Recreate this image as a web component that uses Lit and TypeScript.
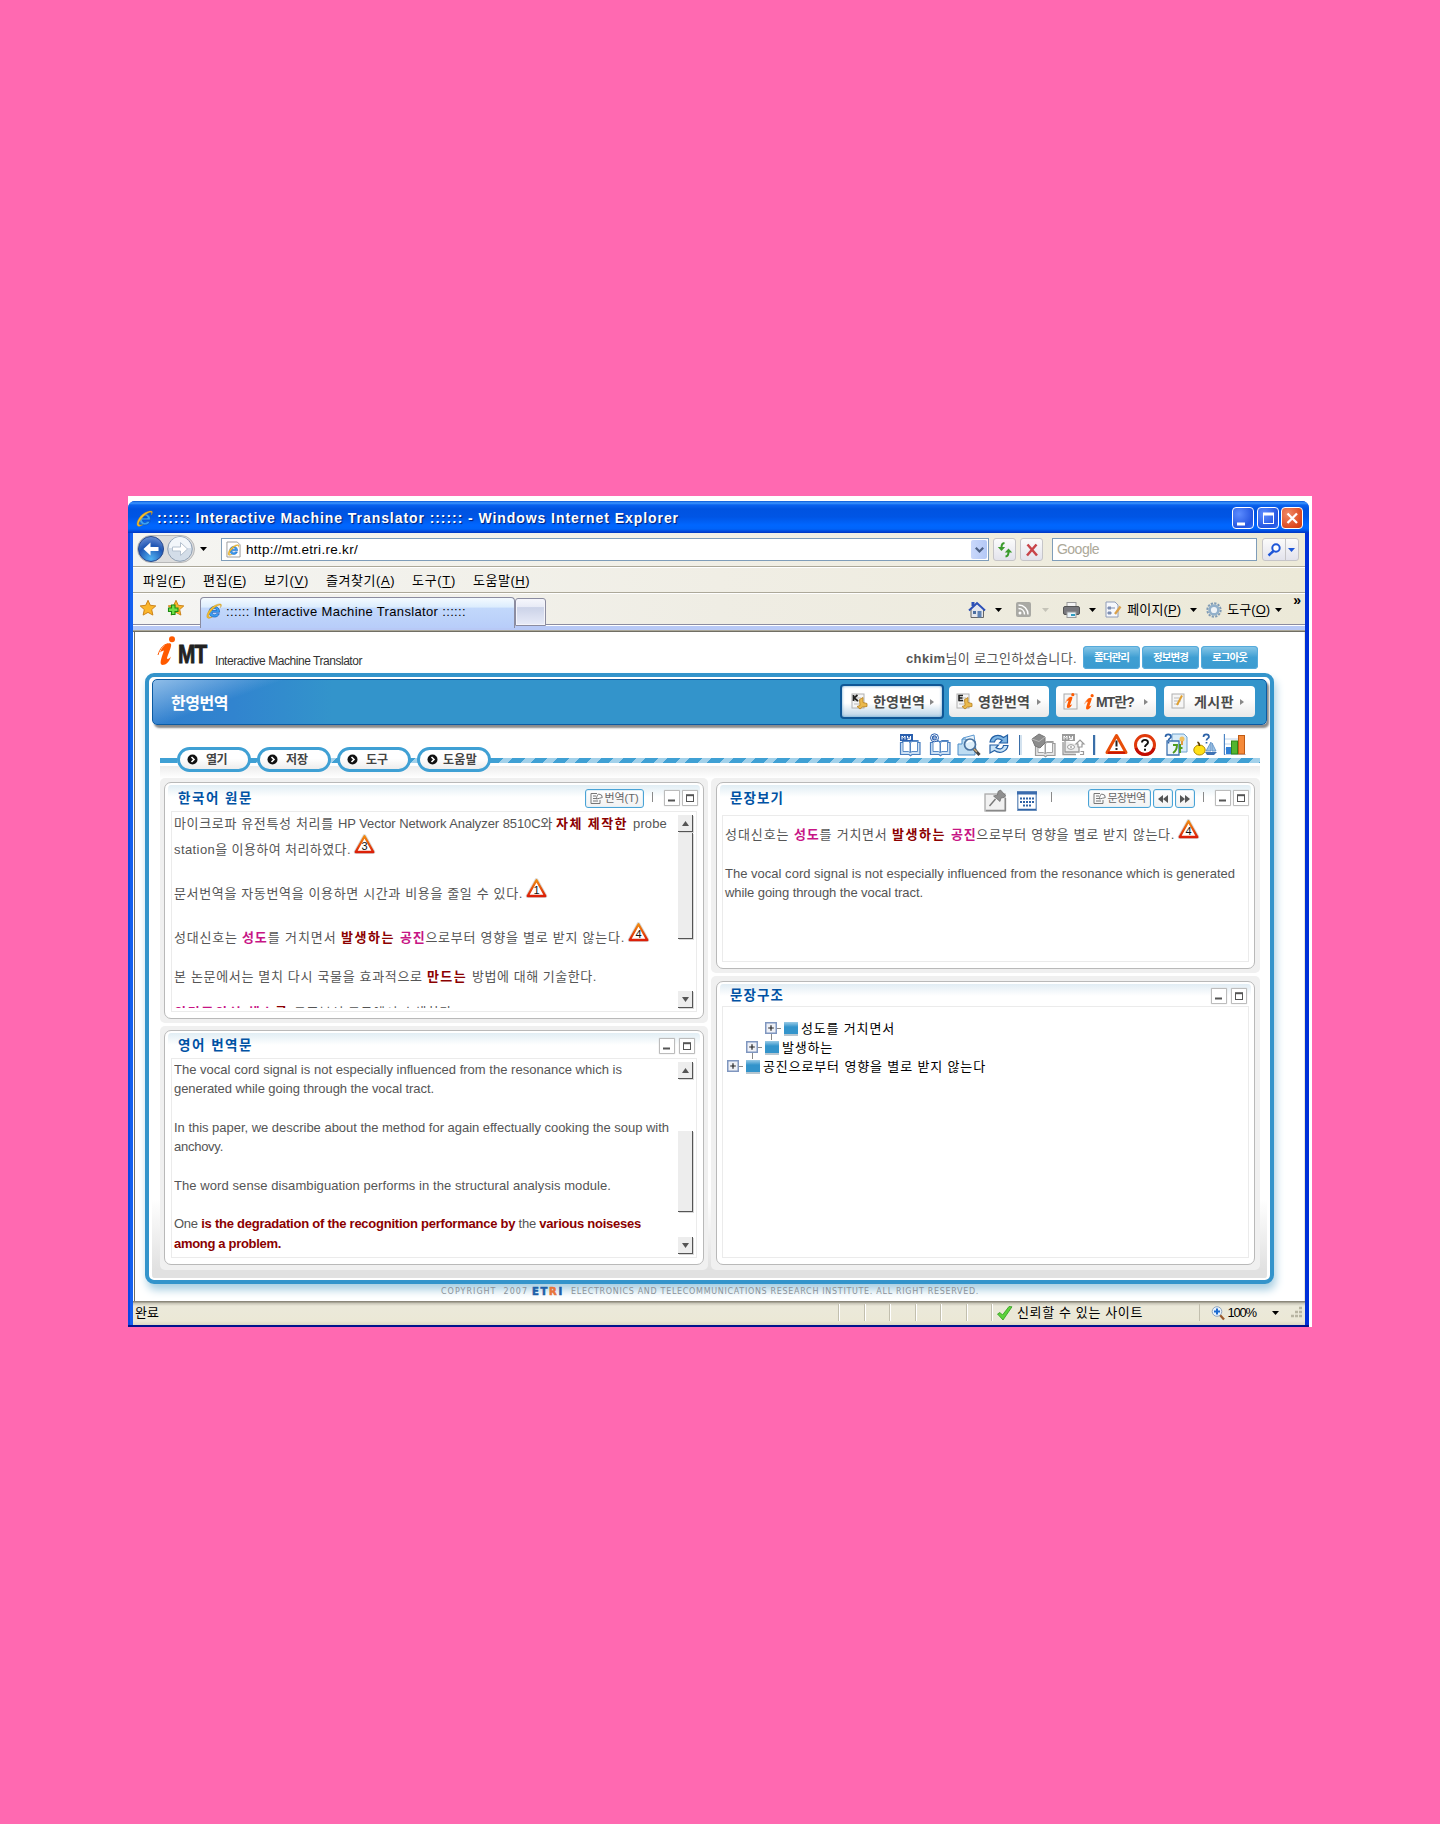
import { LitElement, html, svg, css } from "lit";
import { customElement, property } from "lit/decorators.js";
import { classMap } from "lit/directives/class-map.js";

/** Tracks its text out or in so that the label fills a given width. */
@customElement("fit-text")
class FitText extends LitElement {
  @property({ type: Number }) w = 0;
  static styles = css`
    :host { display: inline-block; white-space: pre; flex: none; }
    span { display: inline-block; }
  `;
  firstUpdated() {
    const s = this.renderRoot.querySelector("span") as HTMLElement;
    const n = s.getBoundingClientRect().width;
    const count = (this.textContent || "").length || 1;
    s.style.letterSpacing = (this.w - n) / count + "px";
    this.style.width = this.w + "px";
  }
  render() {
    return html`<span><slot></slot></span>`;
  }
}

const ic = (w: number, h: number, vb: string, body: unknown) =>
  html`<svg class="ic" width=${w} height=${h} viewBox=${vb}>${body}</svg>`;

const ieGlyph = svg`
  <path d="M13.6 9.300H6c.2 1.700 1.100 2.500 2.400 2.500 1 0 1.700-.4 2.100-1.100h2.800c-.8 2.300-2.600 3.400-5 3.400-3.200 0-5.200-2-5.200-5.200C3.100 5.700 5.200 3.500 8.400 3.500c3.300 0 5.400 2.200 5.200 5.800zM6 7.500h4.700C10.500 6.200 9.700 5.500 8.400 5.500S6.300 6.200 6 7.500z" fill="#3ba0f2" stroke="#0c4fb4" stroke-width=".6"/>
  <path d="M15 1.200C12.500.3 7 2.500 3.700 6.700 1 10.200.2 13.800 1.600 15c1 .8 3 0 4.700-1.100C4.500 14.300 3 14.500 2.700 13.500 2.200 12 4.500 8.500 7.500 5.700 10.500 3 13.500 1.500 14.500 2.300c.5.500.2 1.500-.1 2.300C15.300 3.200 15.800 1.800 15 1.200z" fill="#f6bd2c" stroke="#c08c10" stroke-width=".4"/>`;
const ie = (s = 16) => ic(s, s, "0 0 16 16", ieGlyph);

const caret = (color = "#000") => ic(7, 4, "0 0 7 4", svg`<path d="M0 0h7L3.500 4z" fill=${color}/>`);
const starPath = "M8 .3l2.300 5 5.500.6-4.100 3.700 1.200 5.500L8 12.400l-4.900 2.700 1.200-5.500L.2 5.900l5.500-.6z";

const warn = (n: number) => ic(21, 20, "0 0 21 20", svg`
  <path d="M10.500 2.200L19.300 18H1.700z" fill="#fff" stroke="#d9d9d9" stroke-width="4" stroke-linejoin="round"/>
  <path d="M10.500 2.200L19.300 18H1.700z" fill="#fff" stroke="url(#wg)" stroke-width="2.300" stroke-linejoin="round"/>
  <defs><linearGradient id="wg" x1="0" y1="0" x2="0" y2="1"><stop offset="0" stop-color="#f08a10"/><stop offset="1" stop-color="#dc1f08"/></linearGradient></defs>
  <text x="10.500" y="16" text-anchor="middle" font-size="11" font-family="Liberation Sans" fill="#111">${n}</text>`);

const book = (stroke: string, fill: string) => svg`
  <path d="M1.500 9.500h2v-2h5.500l2 1.500 2-1.500h6v2h2v12h-8l-1.500 1.300-1.500-1.300h-8.500z" fill=${fill} stroke=${stroke} stroke-width="1.200"/>
  <path d="M4 8.500h5.500l1.500 1.300v9.700l-1.500-1H4zM18.500 8.500h-5.500l-1.500 1.300v9.700l1.500-1h5.500z" fill="#fff" stroke=${stroke} stroke-width=".9"/>`;

const tools = {
  my: ic(23, 24, "0 0 23 24", svg`${book("#4a7fc0", "#cfe2f4")}<rect x="1" y="1" width="13" height="7" fill="#2a5fae"/><path d="M3 6.500V3l1.500 1.500L6 3v3.500M8.500 3v2h3V3M11.500 5v1.500h-3" fill="none" stroke="#fff"/>`),
  e: ic(23, 24, "0 0 23 24", svg`${book("#4a7fc0", "#cfe2f4")}<circle cx="5.500" cy="4.800" r="4" fill="#fff" stroke="#2a5fae"/><path d="M3.500 5h4c0-3-4-2.800-4 0 0 2.500 3 2.300 4 1" fill="none" stroke="#2a5fae" stroke-width="1.200"/>`),
  find: ic(25, 24, "0 0 25 24", svg`
    <path d="M6 5l11-3 2 15H6z" fill="#eaf4fc" stroke="#5b97cf"/><path d="M1 11h4V6h4l1 2h8v14H1z" fill="#bddcf2" stroke="#4a8cc8"/>
    <circle cx="13" cy="11.500" r="5.500" fill="#dceefa" stroke="#49729f" stroke-width="1.700"/><path d="M10 10c1-2 3-2.500 5-1.500" stroke="#fff" stroke-width="1.500" fill="none"/>
    <path d="M17 16l5.500 6" stroke="#444" stroke-width="3"/><path d="M17 16l3 3" stroke="#c9a87a" stroke-width="1.500"/>`),
  sync: ic(22, 22, "0 0 22 22", svg`
    <path d="M2 9C3 3 10 0 15.500 4.500L19.500 2v8h-8l2.500-2.700C10 4.500 7 6 6.500 9z" fill="#7fb6e4" stroke="#235fa4" stroke-width="1.200"/>
    <path d="M20 12.500C19 18.500 12 21.500 6.500 17.500L2 20v-8h8.500L8 14.700C12 17 15 16 15.500 12.500z" fill="#c9e3f6" stroke="#235fa4" stroke-width="1.200"/>`),
  grad: ic(25, 24, "0 0 25 24", svg`<g transform="translate(3 1)">${book("#9a9a9a", "#e4e4e4")}</g>
    <path d="M1 6l7-5 6 3v6l-5 5-5-2z" fill="#8c8c8c" stroke="#777"/><path d="M1 6l7 2.500 6-4.500" stroke="#b9b9b9" fill="none"/>`),
  myGray: ic(24, 24, "0 0 24 24", svg`<path d="M2 9v12.500h13M4 8v11h14v-7" fill="#ededed" stroke="#9a9a9a" stroke-width="1.300"/>
    <rect x="1" y="1" width="13" height="7" fill="#9a9a9a"/><path d="M3 6.500V3l1.500 1.500L6 3v3.500M8.500 3v2h3V3M11.500 5v1.500h-3" fill="none" stroke="#fff"/>
    <path d="M15 11l4-4 4 4h-2v3h-4v-3zM19 21.500h3.500v-3h-3" fill="#fff" stroke="#999" stroke-width="1.200"/><ellipse cx="10" cy="14" rx="3.500" ry="2.300" fill="#fff" stroke="#999"/><path d="M10 13v2" stroke="#777"/>`),
  warn: ic(23, 22, "0 0 23 22", svg`<path d="M11.500 2.500L21 19.500H2z" fill="#fff" stroke="#e84e08" stroke-width="3" stroke-linejoin="round"/><path d="M3 19.800h17" stroke="#c81505" stroke-width="2"/><path d="M11.500 7.500v6" stroke="#222" stroke-width="2"/><rect x="10.500" y="15" width="2" height="2" fill="#222"/>`),
  help: ic(24, 24, "0 0 24 24", svg`<circle cx="12" cy="12" r="9.500" fill="#fff" stroke="#e03a0c" stroke-width="3"/><path d="M3 15a9.500 9.500 0 0 0 18 0" stroke="#c20d04" stroke-width="3" fill="none"/><path d="M9 9.500c0-3.500 6-3.500 6 0 0 2-3 2-3 4.500" stroke="#111" stroke-width="1.900" fill="none"/><rect x="11" y="15.700" width="2" height="2" fill="#111"/>`),
  doc: ic(24, 23, "0 0 24 23", svg`<path d="M8 1h12l3 3v15H8z" fill="#d7ebf8" stroke="#6fa2cf"/><path d="M3 8h12v14H3z" fill="#eef6fb" stroke="#3d72b0" stroke-width="1.300"/><path d="M1.500 4c0-3.500 5.500-3.500 5.500 0-.5 1.500-2.500 1.500-2.500 3.500M4.500 9v1.500" stroke="#2c62a8" stroke-width="1.700" fill="none"/><path d="M9 12h4c0 4-1 6-4 8M16 11v9M16 15h2.500" stroke="#4f9b1c" stroke-width="1.900" fill="none"/><circle cx="18" cy="6" r="2.500" fill="#f0c060"/><path d="M17 8h2v4h-2z" fill="#e09a40"/>`),
  fruit: ic(25, 23, "0 0 25 23", svg`<ellipse cx="6.500" cy="17" rx="5.700" ry="5" fill="#ffe016" stroke="#b08c00"/><path d="M6.500 13c0-2 0-3-2-4" stroke="#5a3c00" stroke-width="1.700" fill="none"/><path d="M10.500 4c0-3.500 5.500-3.500 5.500 0-.5 1.500-2.500 1.500-2.500 3.500M13.500 9v1.500" stroke="#2c62a8" stroke-width="1.700" fill="none"/><path d="M18 9v9h-5zM19 10l4 8h-4z" fill="#9cc3e6" stroke="#5a8ec4" stroke-width=".8"/><path d="M12 19h12l-3 3h-7z" fill="#3f73b4"/>`),
  chart: ic(24, 23, "0 0 24 23", svg`<path d="M1 1v20.500h22M1 6h14M1 11h9M1 16h5" stroke="#bcd3ea" fill="none"/><path d="M1.500 1v21" stroke="#4d84c4"/><rect x="3" y="14" width="5" height="7" fill="#2f7fd6"/><rect x="8.500" y="8" width="6" height="13" fill="#52b530" stroke="#2f8718"/><rect x="15.500" y="2.500" width="6" height="18.500" fill="#f58a3a" stroke="#c05a14"/>`),
};

const sheet = (body: unknown) => svg`<rect x="1" y="1" width="12" height="14" fill="#f6f6f6" stroke="#b0b0b0"/><path d="M3 5h7M3 8h7M3 11h5" stroke="#bbb"/>${body}`;
const coin = svg`<path d="M8.500 6.500l3.500-2v5l4 1v3l-4.500.5-2.500 2-3-2.500 3-1z" fill="#eab94c" stroke="#b67f1c" stroke-width=".8"/>`;
const iMark = svg`<circle cx="15" cy="3.200" r="3" fill="#ff5a00"/><path d="M4.500 13c3-4.500 6.500-6.500 9-5.500 2.200 1-1.500 8-3.500 14.500 0 2 2.500.5 4-1.500-1.500 5-5 8.500-8.500 8.500-3.500-.5-1.500-6 1.500-14.500-1 .3-2 .5-4 2z" fill="#ff5a00"/><path d="M1 19C3 12 7 8 11 8" stroke="#ff5a00" stroke-width="1" fill="none"/>`;

const navIcons = [
  ic(17, 17, "0 0 17 17", svg`${sheet(coin)}<path d="M2.500 2v6M6.500 2L3 5l4 3" stroke="#222" stroke-width="1.700" fill="none"/>`),
  ic(17, 17, "0 0 17 17", svg`${sheet(coin)}<path d="M7 2.500H3v5h4M3 5h3.500" stroke="#222" stroke-width="1.600" fill="none"/>`),
  ic(16, 17, "0 0 16 17", svg`<rect x="1" y="1" width="13" height="15" fill="#f6f6f6" stroke="#aaa"/><g transform="translate(2 0) scale(.52)">${iMark}</g>`),
  ic(16, 17, "0 0 16 17", svg`${sheet(svg`<path d="M11 2.500L6 12" stroke="#e0a030" stroke-width="2"/>`)}`),
];
const noteIcon = ic(13, 13, "0 0 13 13", svg`<path d="M7 1.500H1v10h9V8M3 4h3M3 6.500h3M3 9h5" fill="none" stroke="#777"/><path d="M6.500 7c0-2 .5-3.500 2-5l3 1 .8 2.500C11 6 8 6.500 6.500 7z" fill="#fff" stroke="#777"/>`);

const win = (kind: string, wide = false) => html`<span class=${classMap({ wb: true, wide })}>
  ${kind === "min" ? ic(8, 8, "0 0 8 8", svg`<path d="M0 6.500h7" stroke="#555" stroke-width="2"/>`)
    : ic(8, 8, "0 0 8 8", svg`<rect x=".5" y="1.500" width="7" height="6" fill="none" stroke="#555"/><path d="M0 1.200h8" stroke="#555" stroke-width="2"/>`)}</span>`;

const arrow = (down: boolean) => html`<span class="sbtn">${ic(7, 5, "0 0 7 5", down ? svg`<path d="M0 0h7L3.500 5z" fill="#555"/>` : svg`<path d="M0 5h7L3.500 0z" fill="#555"/>`)}</span>`;
const plus = ic(12, 12, "0 0 12 12", svg`<rect x=".75" y=".75" width="10.500" height="10.500" fill="#eef0f6" stroke="#7f96bf" stroke-width="1.500"/><path d="M3.200 6h5.600M6 3.200v5.600" stroke="#222" stroke-width="1.200"/>`);

@customElement("app-root")
class AppRoot extends LitElement {
  static styles = css`
    :host { display: block; height: 1824px; background: #ff69b1; font: 13px/1 "Liberation Sans", "Noto Sans CJK KR", sans-serif; color: #555; box-sizing: border-box; padding: 496px 0 0 128px; }
    * { box-sizing: border-box; }
    .ic { display: block; flex: none; overflow: visible; }
    .shot { width: 1184px; height: 831px; background: #fff; padding-top: 5px; }
    .window { width: 1181px; height: 826px; background: #0a46e4; border-radius: 7px 7px 0 0; overflow: hidden; display: flex; flex-direction: column; border-bottom: 2px solid #00138c; }
    .title { height: 32px; flex: none; background: linear-gradient(#0a57d6, #3c96ff 2px, #0a62ee 4px, #0053e1 8px, #0055e5 16px, #0066ff 24px, #0064fa 28px, #003fd0 31px, #0038c0); display: flex; align-items: center; padding: 2px 6px 0 8px; color: #fff; font-weight: 700; font-size: 14px; text-shadow: 1px 1px 1px #001a70; gap: 4px; }
    .title .grow { flex: 1; }
    .title .cb { width: 22px; height: 22px; border: 1px solid #fff; border-radius: 4px; background: radial-gradient(circle at 30% 30%, #5c8cff, #2456e0 70%, #3070f8); margin-left: -1.500px; display: grid; place-items: center; }
    .title .cb.close { background: radial-gradient(circle at 30% 30%, #f08a68, #dd4a20 70%, #c83a10); }
    .client { width: 1172px; margin-left: 5px; flex: 1; display: flex; flex-direction: column; background: #fff; color: #000; box-shadow: -3px 0 0 #1560f0, 4px 0 0 #0030d8; }
    .nav { height: 35px; background: linear-gradient(90deg, #f5f5f2, #f1efe6 50%, #edead8); border-bottom: 1px solid #fff; display: flex; padding: 5px 6px 0 4px; box-shadow: inset 0 -1px #aca899; }
    .pills { width: 58px; height: 28px; margin-top: -3px; border: 1px solid #b8b8b8; border-radius: 14px; background: #ddd; display: flex; gap: 3px; align-items: center; }
    .nav .dd { margin: 9px 0 0 5px; width: 21px; }
    .addr { width: 768px; height: 23px; border: 1px solid #7f9db9; background: #fff; display: flex; align-items: center; padding: 0 1px 0 4px; gap: 5px; font-size: 13.500px; }
    .addr .drop { margin-left: auto; width: 16px; height: 19px; background: linear-gradient(90deg, #c9d8fb, #b4c8f6); border-radius: 2px; display: grid; place-items: center; }
    .sq { width: 23px; height: 23px; border: 1px solid #c6c5c8; border-radius: 3px; background: linear-gradient(#fbfbfb, #e3e3ec); display: grid; place-items: center; margin-left: 4px; }
    .goog { width: 205px; height: 23px; margin-left: 9px; border: 1px solid #7f9db9; background: #fff; color: #aca899; padding: 3px 0 0 4px; font-size: 14px; }
    .srch { width: 37px; height: 23px; margin-left: 5px; border: 1px solid #c6c5c8; border-radius: 3px; background: linear-gradient(90deg, transparent 22px, #c6c5c8 22px 23px, transparent 23px), linear-gradient(#fbfbfb, #e3e3ec); display: flex; align-items: center; gap: 7px; padding-left: 4px; }
    .menu { height: 26px; background: linear-gradient(90deg, #f4f4f1, #f0eee5 50%, #ece9d8); border-bottom: 1px solid #fff; box-shadow: inset 0 -1px #aca899; display: flex; align-items: center; gap: 17px; padding-left: 10px; font-size: 13px; }
    u { text-underline-offset: 2px; }
    .tabs { height: 38px; background: linear-gradient(90deg, #f5f5f3, #efede4 50%, #ece9d8); display: flex; padding: 3px 0 0 7px; border-bottom: 1px solid #716f64; box-shadow: inset 0 -1px #aca899, inset 0 -5px #b8c9f6, inset 0 -6px #fff, inset 0 -7px #8b8ca0; font-size: 13px; }
    .tabs .stars { width: 60px; display: flex; gap: 12px; padding-top: 3px; }
    .tab { width: 315px; height: 31px; border: 1px solid #8b8ca0; border-bottom: 0; border-radius: 4px 4px 0 0; background: linear-gradient(#f4faff, #dcedfd 30%, #c2d8fb 34%, #b8cdf9); display: flex; align-items: center; gap: 4px; padding: 0 0 4px 5px; }
    .tab2 { width: 31px; height: 28px; margin-top: 1px; border: 1px solid #8b8ca0; border-radius: 3px 3px 0 0; background: linear-gradient(#f6f7fc, #e8ebf6 30%, #ccd3e8 33%, #e8ebf8); box-shadow: inset 0 0 0 1px #f4f4fa; }
    .cmds { margin-left: auto; display: flex; align-items: center; height: 25px; padding-right: 4px; }
    .c-a { margin-left: 11px; } .c-b { margin-left: 14px; } .c-c { margin-left: 9px; } .c-d { margin-left: 5px; }
    .chev { margin: -19px 0 0 11px; font: 700 14px/8px "Liberation Sans", sans-serif; }
    .page { flex: 1; margin-left: 1px; border-left: 1px solid #716f64; border-right: 1px solid #ece9d8; background: #fff; padding-left: 10px; overflow: hidden; }
    .top { height: 41px; display: flex; padding: 4px 0 0 12px; }
    .mt { font-weight: 700; font-size: 26px; line-height: 26px; color: #222; -webkit-text-stroke: .9px #222; margin: 5px 0 0 -1px; transform: scaleX(.8); transform-origin: 0 0; width: 37px; letter-spacing: -1px; }
    .tag { font: 12px/14px "Liberation Sans Narrow", "Liberation Sans", sans-serif; color: #333; margin-top: 18px; }
    .who { margin: 16px 0 0 544px; color: #555; }
    .acct { display: flex; gap: 2px; margin: 10px 0 0 6px; }
    .acct span { width: 57px; height: 23px; border-radius: 4px; background: linear-gradient(#8cc9e8, #3f9fd3 50%, #3b9bd0); color: #fff; font-weight: 700; font-size: 10.500px; display: grid; place-items: center; box-shadow: inset 0 0 0 1px #55aadb; }
    .frame { width: 1129px; height: 611px; border: 4px solid #3394cb; border-radius: 9px; padding: 2px 3px; background: linear-gradient(#fff 520px, #e1e1e1 590px) content-box, #fff; box-shadow: 2px 6px 9px #a9cfe2; }
    .bar { height: 46px; border: 1px solid #0b5aa2; border-radius: 5px; background: linear-gradient(160deg, #8fbde8, rgba(50,130,205,0) 45px), linear-gradient(90deg, #307fce, #3184cf 80px, #3394cb 180px); box-shadow: 2px 3px 2px #8a8a8a; display: flex; padding: 4px 11px 0 18px; color: #fff; }
    .bar b { font-size: 16px; margin-top: 12px; flex: 1; }
    .nb { height: 31px; margin-top: 2px; border-radius: 4px; background: linear-gradient(#fff 40%, #e9e9e9); color: #4a4a4a; font-weight: 700; font-size: 14px; display: flex; align-items: center; padding-left: 7px; width: 100px; margin-left: 7px; }
    .nb .ic { margin-right: 5px; }
    .nb .go { margin: 0 3px 0 auto; }
    .nb.on { width: 104px; height: 35px; margin: 0 5px 0 0; border: 2px solid #0f5796; background: linear-gradient(#fff 55%, #b9d3e6); box-shadow: inset 0 0 3px #6aa5cf; padding-left: 9px; }
    .nb.on + .nb { margin-left: 0; }
    .nb.last { width: 91px; margin-left: 8px; }
    .nb.last > .ic { margin-right: 7px; }
    .nb.last .go { margin-right: 6px; }
    .nb .ic.mini { margin-right: 0; }
    .tools { height: 33px; margin-left: 747px; width: 348px; padding-top: 8px; display: grid; grid-template-columns: 30px 28px 31px 31px 12px 30px 32px 12px 28px 31px 29px 30px 24px; align-items: start; }
    .tools i { width: 3px; height: 20px; margin-top: 2px; background: linear-gradient(90deg, #3a6ea8 1.500px, #d3e2ef 1.500px); }
    .pillrow { width: 1100px; height: 31px; margin: -11px 0 0 8px; display: flex; gap: 6px; padding-left: 17px;
      background: linear-gradient(90deg, #3fa0d4 17px, transparent 17px) 0 11px / 100% 5px no-repeat, repeating-linear-gradient(135deg, #3fa0d4 0 9px, #a3d1ea 9px 15.600px) 0 11px / 100% 5px no-repeat, linear-gradient(#ececec, #fff) 0 19px / 100% 12px no-repeat; }
    .pill { width: 74px; height: 25px; border: 3px solid #3fa0d4; border-radius: 13px; background: linear-gradient(#fff 45%, #ececec); display: flex; align-items: center; font-weight: 700; font-size: 12px; color: #444; padding-left: 7px; }
    .pill fit-text { margin-left: 8px; }
    .pill:last-child fit-text { margin-left: 5px; }
    .cols { display: grid; grid-template-columns: 548px 549px; gap: 3px; margin-left: 8px; }
    .col { display: flex; flex-direction: column; gap: 3px; }
    .panel { background: #f0f0f0; border-radius: 5px; padding: 4px; }
    .p1 { height: 245px; } .p2 { height: 244px; padding-bottom: 5px; } .p3 { height: 195px; padding: 4px 5px; } .p4 { height: 294px; padding: 5px; }
    .inner { height: 100%; border: 1.500px solid #b9b9b9; border-radius: 7px; padding: 2px 3px; background: linear-gradient(#e1edf4, rgba(255,255,255,0) 12px) content-box, #fff; }
    .head { height: 26px; display: flex; align-items: flex-start; padding: 4px 2.500px 0 10px; }
    .head > fit-text { margin-right: auto; font-size: 13.500px; color: #0052a4; font-weight: 700; line-height: 20px; }
    .p2 .head { height: 25px; padding-right: 5px; }
    .p2 .head > fit-text { line-height: 18px; }
    .p3 .head { height: 30px; }
    .p4 .head { height: 22px; padding: 3px 4px 0 10px; }
    .p4 .head > fit-text { line-height: 17px; }
    .box { height: 201px; margin: 0 3px; border: 1px solid #ebebeb; background: #fff; display: flex; justify-content: space-between; overflow: hidden; color: #555; font-size: 13px; padding: 0 3px 3px 2px; }
    .p2 .box { height: 200px; } .p3 .box { height: 147px; margin: 0 2px; } .p4 .box { height: 252px; margin: 0 2px; }
    .wb { width: 16px; height: 16px; border: 1.500px solid #bcbcbc; border-radius: 1px; background: #fff; display: grid; place-items: center; margin: 1px 0 0 2px; box-shadow: 0 0 1px #aaa; }
    .wb.wide { margin-left: 4px; }
    .btn { height: 19px; border: 1px solid #4aa3d6; border-radius: 3px; background: linear-gradient(#fff, #f2f2f2); box-shadow: inset 0 0 0 1px #e3f0f7; display: flex; align-items: center; justify-content: center; gap: 2px; font-size: 11px; color: #666; margin-left: 2px; }
    .b59 { width: 59px; } .b63 { width: 63px; } .b20 { width: 20px; }
    .bar1 { width: 1px; height: 10px; background: #8a8a8a; margin: 3px 9px 0 8px; }
    .pin { margin-right: 10px; }
    .vb { margin: 3px 34px 0 14px; }
    .txt { flex: none; width: 500px; overflow: hidden; }
    .ln { height: 30px; display: flex; align-items: center; }
    .ln .ic { margin: -10px 0 0 3px; }
    .l22 { height: 22px; } .m13 { margin-top: 14px; } .m15 { margin-top: 14px; } .m11 { margin-top: 12px; height: 24px; } .clip { margin-top: 13px; height: 22px; }
    b.pk { color: #c71585; } b.rd { color: #8b0000; }
    .en { line-height: 19.300px; padding-top: 1px; height: 19.300px; display: block; }
    .en.gap { margin-top: 19.300px; }
    .sb { width: 15px; display: flex; flex-direction: column; padding-top: 3px; }
    .sbtn, .thumb { width: 15px; background: #ededed; border-right: 1px solid #555; border-bottom: 1px solid #555; box-shadow: 1px 1px #d8d8d8; }
    .sbtn { height: 17px; display: grid; place-items: center; flex: none; }
    .t1 { height: 106px; margin: 1px 0 52px; } .t2 { height: 84px; margin: 52px 0 25px; }
    .vt { padding-top: 3px; }
    .ve { margin-top: 14px; }
    .tree { padding-top: 12px; color: #000; }
    .node { height: 19px; display: flex; align-items: center; padding-left: 2px; }
    .node.d2 { padding-left: 21px; } .node.d3 { padding-left: 40px; }
    .dash { width: 4px; height: 1px; background: #888; margin-right: 3px; }
    .blk { width: 14px; height: 14px; background: linear-gradient(#9acbe6, #3394cb 5px, #3394cb 12px, #b7c6d0 12px); margin-right: 3px; }
    .node .stem { align-self: stretch; position: relative; }
    .stem .ic { margin-top: 3px; }
    .d2 .stem::after, .d3 .stem::after { content: ""; position: absolute; left: 6px; top: 15px; width: 1px; height: 6px; background: #888; }
    .copy { display: flex; align-items: center; margin: 3px 0 0 296px; height: 9px; font: 8px/9px "DejaVu Sans", sans-serif; color: #8a9299; position: relative; }
    .etri { font: 700 10px/9px "DejaVu Sans", sans-serif; color: #1d5fa8; -webkit-text-stroke: .6px; margin: 0 7px 0 4px; }
    .etri em { font-style: normal; color: #e8743a; }
    .status { height: 24px; flex: none; background: linear-gradient(#8b887b 1px, #c5c2b4 2px, #ebe9da 5px, #ebe8d6 20px, #dcd8c4); display: flex; align-items: center; padding: 0 3px 1px 2px; font-size: 13px; color: #000; }
    .seps { display: flex; gap: 23.500px; margin-left: 679px; }
    .seps i, .s1 { width: 2px; height: 17px; background: linear-gradient(90deg, #c2bfae 1px, #fff 1px); }
    .s1 { margin-left: 56px; margin-right: 11px; }
    .ck { margin: 0 4px 0 3px; }
    .zc { margin: 0 11px 0 16px; }
  `;

  private cb(kind: string) {
    const body =
      kind === "min" ? svg`<path d="M3 15h8" stroke="#fff" stroke-width="3"/>`
      : kind === "max" ? svg`<rect x="4.500" y="4.500" width="10" height="10" fill="none" stroke="#fff"/><path d="M4 5h11" stroke="#fff" stroke-width="3"/>`
      : svg`<path d="M4.500 4.500l9.500 9.500M14 4.500L4.500 14" stroke="#fff" stroke-width="2.300"/>`;
    return html`<span class=${classMap({ cb: true, close: kind === "close" })}>${ic(18, 18, "0 0 18 18", body)}</span>`;
  }

  private chrome() {
    return html`
      <div class="title">${ie(17)}<fit-text w="522">:::::: Interactive Machine Translator :::::: - Windows Internet Explorer</fit-text><span class="grow"></span>${this.cb("min")}${this.cb("max")}${this.cb("close")}</div>
      <div class="client">
        <div class="nav">
          <div class="pills">
            ${ic(26, 26, "0 0 26 26", svg`<defs><radialGradient id="bk" cx=".5" cy=".9" r=".9"><stop offset="0" stop-color="#4fb2f2"/><stop offset=".6" stop-color="#1f56b4"/><stop offset="1" stop-color="#6b8fd4"/></radialGradient></defs><circle cx="13" cy="13" r="12.500" fill="url(#bk)" stroke="#27488c"/><path d="M5.500 13l7-6.500v4.500h8v4h-8v4.500z" fill="#fff"/>`)}
            ${ic(26, 26, "0 0 26 26", svg`<circle cx="13" cy="13" r="12.300" fill="#d3dde8" stroke="#8f9fb2"/><path d="M2 12a11 11 0 0 1 22 0z" fill="#f2f6fa"/><path d="M20.500 13l-7-6.500v4.500h-8v4h8v4.500z" fill="#fff" stroke="#b5c1cf"/>`)}
          </div>
          <span class="dd">${caret()}</span>
          <div class="addr">${ic(15, 17, "0 0 16 18", svg`<path d="M1 1h11l3 3v13H1z" fill="#fff" stroke="#999"/><g transform="translate(1.500 3) scale(.8)">${ieGlyph}</g>`)}<fit-text w="112">http://mt.etri.re.kr/</fit-text><span class="drop">${ic(9, 6, "0 0 9 6", svg`<path d="M.8.8l3.700 3.700L8.200.8" fill="none" stroke="#4d6185" stroke-width="2.200"/>`)}</span></div>
          <span class="sq">${ic(16, 16, "0 0 16 16", svg`<path d="M7.500 1C5 1.300 4.500 3 4.500 5.500" fill="none" stroke="#3b9b2c" stroke-width="2"/><path d="M.8 5h7.400L4.500 9z" fill="#3b9b2c"/><path d="M8.500 14.500c2.500-.3 3-2 3-4.500" fill="none" stroke="#3b9b2c" stroke-width="2"/><path d="M7.800 10.500h7.400L11.500 6.500z" fill="#3b9b2c"/>`)}</span>
          <span class="sq">${ic(14, 14, "0 0 14 14", svg`<path d="M2.500 1.500l9.500 11M11.500 1.500l-9.500 11" stroke="#c8444a" stroke-width="2.500"/>`)}</span>
          <div class="goog"><fit-text w="42">Google</fit-text></div>
          <div class="srch">${ic(14, 14, "0 0 14 14", svg`<circle cx="9" cy="5" r="3.700" fill="#fff" stroke="#1d56d8" stroke-width="2"/><path d="M6.500 8L1.500 12.500" stroke="#1d56d8" stroke-width="2.500"/>`)}${caret("#1d56d8")}</div>
        </div>
        <div class="menu">
          <fit-text w="43">파일(<u>F</u>)</fit-text><fit-text w="44">편집(<u>E</u>)</fit-text><fit-text w="45">보기(<u>V</u>)</fit-text><fit-text w="69">즐겨찾기(<u>A</u>)</fit-text><fit-text w="44">도구(<u>T</u>)</fit-text><fit-text w="57">도움말(<u>H</u>)</fit-text>
        </div>
        <div class="tabs">
          <div class="stars">
            ${ic(16, 16, "0 0 16 16", svg`<path d=${starPath} fill="#fbb62c" stroke="#c77c10" stroke-width=".9"/>`)}
            ${ic(16, 16, "0 0 16 16", svg`<path d=${starPath} fill="#fbb62c" stroke="#c77c10" stroke-width=".9"/><path d="M3.500 5h3.500v3h3v3.500H7v3H3.500v-3h-3V8h3z" fill="#6fe04a" stroke="#1d8a12" stroke-width="1.100"/>`)}
          </div>
          <div class="tab">${ie(16)}<fit-text w="240">:::::: Interactive Machine Translator ::::::</fit-text></div>
          <div class="tab2"></div>
          <div class="cmds">
            ${ic(18, 18, "0 0 18 18", svg`<path d="M3 8v8.500h12.500V8L9 2.500z" fill="#e4e6ec" stroke="#666"/><path d="M1 9.500L9 2l8 7.500" fill="none" stroke="#2c50b8" stroke-width="2"/><rect x="3.500" y="1" width="3" height="4" fill="#2c50b8"/><rect x="9.500" y="10" width="4" height="6.500" fill="#5f82b4"/><rect x="5" y="10" width="3" height="3" fill="#4c6fa0"/>`)}
            <span class="c-c">${caret()}</span>
            <span class="c-b">${ic(15, 15, "0 0 15 15", svg`<rect width="15" height="15" rx="2" fill="#a9a9a4"/><circle cx="4" cy="11" r="1.500" fill="#fff"/><path d="M2.500 6.500c3.500 0 6 2.500 6 6M2.500 3c5.500 0 9.500 4 9.500 9.500" fill="none" stroke="#fff" stroke-width="1.500"/>`)}</span>
            <span class="c-a">${caret("#c5c3b8")}</span>
            <span class="c-b">${ic(17, 16, "0 0 17 16", svg`<rect x="4" y="0.500" width="9" height="5" fill="#f4f4f4" stroke="#999"/><rect x=".5" y="4.500" width="16" height="8" rx="1.500" fill="#77777c" stroke="#555"/><rect x="4" y="10" width="9" height="5.500" fill="#e8f2f8" stroke="#999"/><rect x="8" y="12" width="4" height="2" fill="#2e9cc0"/>`)}</span>
            <span class="c-c">${caret()}</span>
            <span class="c-c">${ic(17, 17, "0 0 17 17", svg`<path d="M1 1h9l3 3v12H1z" fill="#f6f8fc" stroke="#8f9cb8"/><path d="M3 6h3v2H3zM3 11h3v2H3zM7 7h3" fill="#7d8db0" stroke="#7d8db0"/><path d="M15.500 5.500L10 13" stroke="#dba14a" stroke-width="2.300"/>`)}</span>
            <span class="c-d"><fit-text w="54">페이지(<u>P</u>)</fit-text></span>
            <span class="c-c">${caret()}</span>
            <span class="c-c">${ic(16, 16, "0 0 18 18", svg`<circle cx="9" cy="9" r="7.500" fill="none" stroke="#7f9ab4" stroke-width="2.200" stroke-dasharray="2.500 1.430"/><circle cx="9" cy="9" r="5" fill="#eef2f6" stroke="#92b0ca" stroke-width="3"/>`)}</span>
            <span class="c-d"><fit-text w="43">도구(<u>O</u>)</fit-text></span>
            <span class="c-d">${caret()}</span>
            <span class="chev">»</span>
          </div>
        </div>
        <div class="page">${this.pageTop()}${this.frame()}${this.copyright()}</div>
        <div class="status">
          <fit-text w="24">완료</fit-text>
          <div class="seps"><i></i><i></i><i></i><i></i><i></i><i></i><i></i></div>
          <span class="ck">${ic(17, 16, "0 0 17 16", svg`<path d="M1.500 9l2.500-1.500L6.500 10 13 1.500l3 .3L7 15z" fill="#5dd33c" stroke="#2e9a1c" stroke-width=".8"/>`)}</span>
          <fit-text w="126">신뢰할 수 있는 사이트</fit-text>
          <i class="s1"></i>
          ${ic(14, 14, "0 0 14 14", svg`<path d="M8.500 8.500l4.500 5" stroke="#9b5a2c" stroke-width="2.300"/><circle cx="6" cy="5.500" r="4.800" fill="#e8f2fc" stroke="#8fa4bd"/><path d="M3 5.500h6M6 2.500v6" stroke="#1a6ad0" stroke-width="2"/>`)}
          <fit-text w="31">&nbsp;100%</fit-text>
          <span class="zc">${caret()}</span>
          ${ic(12, 12, "0 0 12 12", svg`<path d="M9 1h3M5 5h3M9 5h3M1 9h3M5 9h3M9 9h3" stroke="#b8b5a2" stroke-width="2.500"/>`)}
        </div>
      </div>`;
  }

  private pageTop() {
    return html`<div class="top">
      ${ic(22, 30, "0 0 22 30", iMark)}<span class="mt">MT</span>
      <span class="tag"><fit-text w="147">Interactive Machine Translator</fit-text></span>
      <span class="who"><fit-text w="171"><b>chkim</b>님이 로그인하셨습니다.</fit-text></span>
      <div class="acct"><span><fit-text w="35">폴더관리</fit-text></span><span><fit-text w="35">정보변경</fit-text></span><span><fit-text w="35">로그아웃</fit-text></span></div>
    </div>`;
  }

  private frame() {
    const go = html`<span class="go">${ic(4, 6, "0 0 4 6", svg`<path d="M0 0l4 3-4 3z" fill="#888"/>`)}</span>`;
    const pill = (t: string, w: number) => html`<span class="pill">${ic(11, 11, "0 0 11 11", svg`<circle cx="5.500" cy="5.500" r="5" fill="#111"/><path d="M4.500 3l2.500 2.500-2.500 2.500" stroke="#fff" stroke-width="1.600" fill="none"/>`)}<fit-text w=${w}>${t}</fit-text></span>`;
    return html`<div class="frame">
      <div class="bar"><b><fit-text w="57">한영번역</fit-text></b>
        <span class="nb on">${navIcons[0]}<fit-text w="52">한영번역</fit-text>${go}</span>
        <span class="nb">${navIcons[1]}<fit-text w="52">영한번역</fit-text>${go}</span>
        <span class="nb">${navIcons[2]}<svg class="ic mini" width="12" height="16" viewBox="0 0 22 30">${iMark}</svg><fit-text w="38">MT란?</fit-text>${go}</span>
        <span class="nb last">${navIcons[3]}<fit-text w="40">게시판</fit-text>${go}</span>
      </div>
      <div class="tools">${tools.my}${tools.e}${tools.find}${tools.sync}<i></i>${tools.grad}${tools.myGray}<i></i>${tools.warn}${tools.help}${tools.doc}${tools.fruit}${tools.chart}</div>
      <div class="pillrow">${pill("열기", 21)}${pill("저장", 22)}${pill("도구", 22)}${pill("도움말", 34)}</div>
      <div class="cols">
        <div class="col">${this.source()}${this.english()}</div>
        <div class="col">${this.view()}${this.structure()}</div>
      </div>
    </div>`;
  }

  private source() {
    return html`<section class="panel p1"><div class="inner">
      <div class="head"><fit-text w="75">한국어 원문</fit-text><span class="btn b59">${noteIcon}<fit-text w="34">번역(T)</fit-text></span><i class="bar1"></i>${win("min")}${win("max")}</div>
      <div class="box"><div class="txt">
        <div class="ln l22"><fit-text w="164">마이크로파 유전특성 처리를 </fit-text><fit-text w="218">HP Vector Network Analyzer 8510C와 </fit-text><fit-text w="77"><b class="rd">자체 제작한</b> </fit-text><fit-text w="34">probe</fit-text></div>
        <div class="ln"><fit-text w="177">station을 이용하여 처리하였다.</fit-text>${warn(3)}</div>
        <div class="ln m13"><fit-text w="349">문서번역을 자동번역을 이용하면 시간과 비용을 줄일 수 있다.</fit-text>${warn(1)}</div>
        <div class="ln m15">${this.cord(68, 99, 59, 225)}${warn(4)}</div>
        <div class="ln m11"><fit-text w="253">본 논문에서는 멸치 다시 국물을 효과적으로 </fit-text><fit-text w="45"><b class="rd">만드는</b> </fit-text><fit-text w="125">방법에 대해 기술한다.</fit-text></div>
        <div class="ln clip"><fit-text w="120"><b class="pk">의미중의성 해소</b><b class="rd">를</b> </fit-text><fit-text w="158">구조분석 모듈에서 수행한다</fit-text></div>
      </div>
      <div class="sb">${arrow(false)}<span class="thumb t1"></span>${arrow(true)}</div></div>
    </div></section>`;
  }

  private cord(a: number, b: number, c: number, d: number) {
    return html`<fit-text w=${a}>성대신호는 </fit-text><fit-text w=${b}><b class="pk">성도</b>를 거치면서 </fit-text><fit-text w=${c}><b class="rd">발생하는</b> </fit-text><fit-text w=${d}><b class="pk">공진</b>으로부터 영향을 별로 받지 않는다.</fit-text>`;
  }

  private english() {
    return html`<section class="panel p2"><div class="inner">
      <div class="head"><fit-text w="75">영어 번역문</fit-text>${win("min")}${win("max", true)}</div>
      <div class="box"><div class="txt">
        <div class="en"><fit-text w="448">The vocal cord signal is not especially influenced from the resonance which is</fit-text></div>
        <div class="en"><fit-text w="260">generated while going through the vocal tract.</fit-text></div>
        <div class="en gap"><fit-text w="495">In this paper, we describe about the method for again effectually cooking the soup with</fit-text></div>
        <div class="en"><fit-text w="49">anchovy.</fit-text></div>
        <div class="en gap"><fit-text w="437">The word sense disambiguation performs in the structural analysis module.</fit-text></div>
        <div class="en gap"><fit-text w="467">One <b class="rd">is the degradation of the recognition performance by</b> the <b class="rd">various noiseses</b></fit-text></div>
        <div class="en"><fit-text w="107"><b class="rd">among a problem.</b></fit-text></div>
      </div>
      <div class="sb">${arrow(false)}<span class="thumb t2"></span>${arrow(true)}</div></div>
    </div></section>`;
  }

  private view() {
    return html`<section class="panel p3"><div class="inner">
      <div class="head"><fit-text w="54">문장보기</fit-text>
        <span class="pin">${ic(23, 23, "0 0 23 23", svg`<rect x="1" y="5" width="20" height="17" fill="#f1f1f1" stroke="#aaa" stroke-width="1.300"/><path d="M2 21.500h19.500V9" fill="none" stroke="#888" stroke-width="1.300"/><path d="M5.500 17l6-7" stroke="#777" stroke-width="1.400"/><path d="M9.500 7l4-1 .5-3.500 2.500-1.500 5 5.500-1.500 2-3 .5-1 3.500z" fill="#8f8f8f" stroke="#6a6a6a" stroke-width=".7"/>`)}</span>
        ${ic(20, 22, "0 0 20 22", svg`<rect x=".75" y="2.750" width="18.500" height="18.500" fill="#fff" stroke="#7b9cc4" stroke-width="1.500"/><path d="M0 4h20" stroke="#3b6cae" stroke-width="3"/><path d="M3 9.500h14M3 13h14M6 16.500h8" stroke="#2f62a6" stroke-width="2" stroke-dasharray="2 1"/><path d="M1 20.500h18" stroke="#2f62a6" stroke-width="1.500"/>`)}
        <i class="bar1 vb"></i>
        <span class="btn b63">${noteIcon}<fit-text w="38">문장번역</fit-text></span>
        <span class="btn b20">${ic(10, 8, "0 0 10 8", svg`<path d="M5 0v8L0 4zM10 0v8L5 4z" fill="#555"/>`)}</span>
        <span class="btn b20">${ic(10, 8, "0 0 10 8", svg`<path d="M0 0v8l5-4zM5 0v8l5-4z" fill="#555"/>`)}</span>
        <i class="bar1"></i>${win("min")}${win("max")}
      </div>
      <div class="box"><div class="vt">
        <div class="ln">${this.cord(69, 98, 59, 224)}${warn(4)}</div>
        <div class="en ve"><fit-text w="510">The vocal cord signal is not especially influenced from the resonance which is generated</fit-text></div>
        <div class="en"><fit-text w="198">while going through the vocal tract.</fit-text></div>
      </div></div>
    </div></section>`;
  }

  private structure() {
    const node = (t: string, w: number, d: string) => html`<div class="node ${d}"><span class="stem">${plus}</span><i class="dash"></i><i class="blk"></i><fit-text w=${w}>${t}</fit-text></div>`;
    return html`<section class="panel p4"><div class="inner">
      <div class="head"><fit-text w="54">문장구조</fit-text>${win("min")}${win("max", true)}</div>
      <div class="box"><div class="tree">
        ${node("성도를 거치면서", 94, "d3")}${node("발생하는", 51, "d2")}${node("공진으로부터 영향을 별로 받지 않는다", 223, "")}
      </div></div>
    </div></section>`;
  }

  private copyright() {
    return html`<div class="copy"><fit-text w="87">COPYRIGHT  2007</fit-text><span class="etri"><fit-text w="32">ET<em>R</em>I</fit-text></span><fit-text w="408">ELECTRONICS AND TELECOMMUNICATIONS RESEARCH INSTITUTE. ALL RIGHT RESERVED.</fit-text></div>`;
  }

  render() {
    return html`<div class="shot"><div class="window">${this.chrome()}</div></div>`;
  }
}
